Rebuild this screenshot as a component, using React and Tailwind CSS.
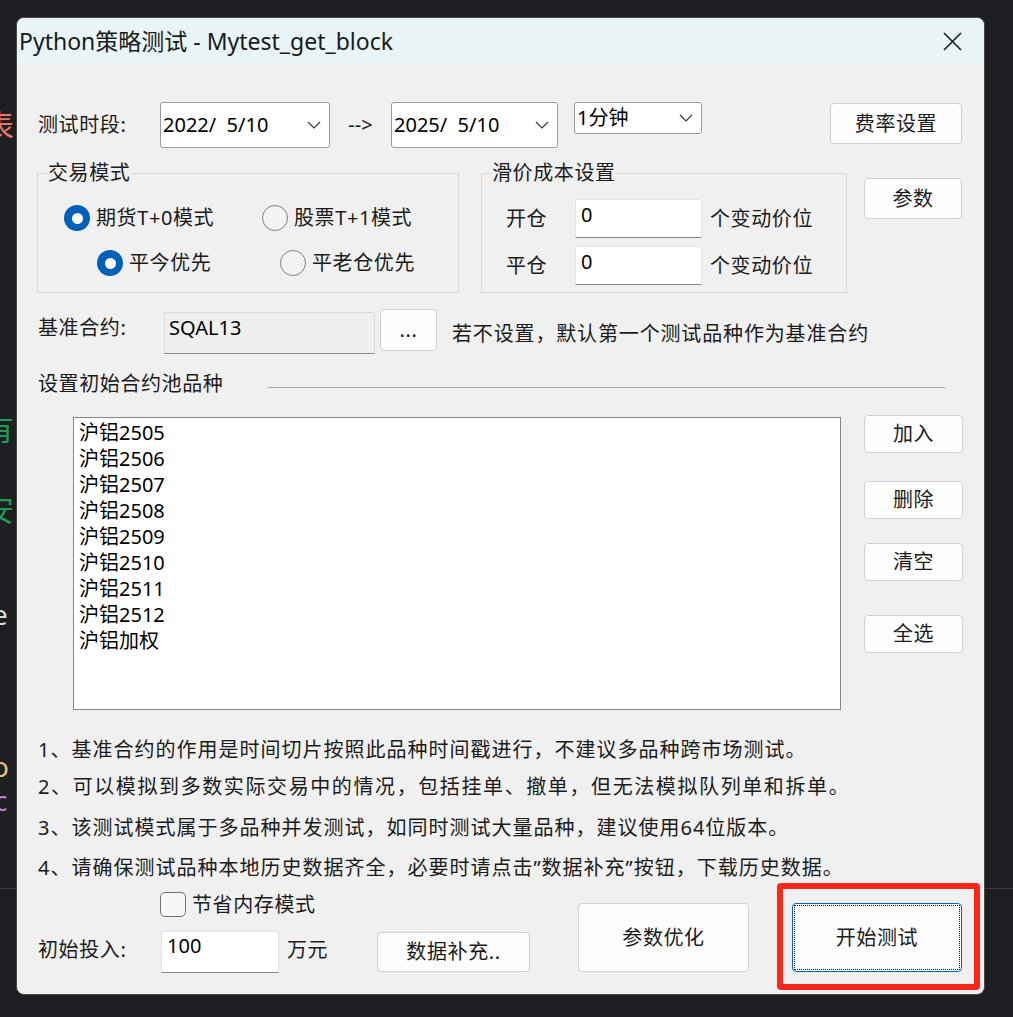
import React from "react";

function Chevron() {
  return (
    <svg width="14" height="8" viewBox="0 0 14 8">
      <polyline points="1,1 7,7 13,1" fill="none" stroke="#3a3a3a" strokeWidth="1.2" />
    </svg>
  );
}

function Btn({ children, className }) {
  return (
    <div
      className={
        "flex items-center justify-center rounded-[4px] border border-[#d0d0d0] bg-[#fdfdfd] text-[20px] leading-[28px] tracking-[0.6px] text-[#1b1b1b] " +
        className
      }
    >
      {children}
    </div>
  );
}

function Radio({ checked, label, className }) {
  return (
    <div className={"flex items-center " + className}>
      {checked ? (
        <div className="flex h-[26px] w-[26px] shrink-0 items-center justify-center rounded-full bg-[#005fb8]">
          <div className="h-[11px] w-[11px] rounded-full bg-white" />
        </div>
      ) : (
        <div className="h-[26px] w-[26px] shrink-0 rounded-full border-[1.5px] border-[#7f7f7f] bg-[#f3f3f3]" />
      )}
      <span className="ml-[6px] text-[20px] leading-[28px] tracking-[0.6px]">{label}</span>
    </div>
  );
}

function Combo({ text, className }) {
  return (
    <div
      className={
        "flex items-center justify-between rounded-[3px] border border-[#9a9a9a] bg-white pl-[2px] pr-[8px] " +
        className
      }
    >
      <span className="whitespace-pre text-[20px] leading-[28px] text-black">{text}</span>
      <Chevron />
    </div>
  );
}

function Edit({ value, className }) {
  return (
    <div
      className={
        "rounded-t-[3px] border border-[#e4e4e4] border-b-[1.5px] border-b-[#878787] bg-white pl-[5px] text-[20px] leading-[28px] text-black " +
        className
      }
    >
      {value}
    </div>
  );
}

const items = [
  "沪铝2505",
  "沪铝2506",
  "沪铝2507",
  "沪铝2508",
  "沪铝2509",
  "沪铝2510",
  "沪铝2511",
  "沪铝2512",
  "沪铝加权",
];

export default function App() {
  return (
    <div className="relative h-[1017px] w-[1013px] overflow-hidden bg-[#1e1f22] font-['Noto_Sans','Noto_Sans_CJK_SC',sans-serif] text-[#1b1b1b]">
      {/* desktop behind the window */}
      <div className="absolute left-0 top-[888px] h-px w-full bg-[#3a3b3f]" />
      <span className="absolute left-[-16px] top-[110px] text-[30px] leading-[30px] text-[#e8746a]">表</span>
      <span className="absolute left-[-16px] top-[414px] text-[30px] leading-[30px] text-[#1f9d55]">有</span>
      <span className="absolute left-[-16px] top-[495px] text-[30px] leading-[30px] text-[#1f9d55]">安</span>
      <span className="absolute left-[-8px] top-[602px] text-[28px] leading-[24px] text-[#d8d8d8]">e</span>
      <span className="absolute left-[-8px] top-[754px] text-[28px] leading-[24px] text-[#e5c07b]">o</span>
      <span className="absolute left-[-6px] top-[788px] text-[28px] leading-[24px] text-[#b57ee0]">c</span>

      <div className="relative pl-[16px] pt-[17px]">
        <div className="relative flex h-[978px] w-[969px] flex-col overflow-hidden rounded-[8px] border border-[#4a4a4a] bg-[#f0f0f0]">
          {/* title bar */}
          <div className="flex h-[46px] shrink-0 items-center justify-between bg-[#e9f4f7] pl-[2px] pr-[22px]">
            <span className="text-[23px] leading-[30px] text-[#1a1a1a]">Python策略测试 - Mytest_get_block</span>
            <svg width="19" height="19" viewBox="0 0 19 19">
              <path d="M1 1 L18 18 M18 1 L1 18" stroke="#1a1a1a" strokeWidth="1.6" fill="none" />
            </svg>
          </div>

          {/* row 1 */}
          <div className="mt-[38px] flex items-start">
            <div className="ml-[21px] flex h-[46px] w-[122px] items-center text-[20px] leading-[28px] tracking-[0.6px]">测试时段:</div>
            <Combo text="2022/  5/10" className="h-[46px] w-[170px]" />
            <div className="flex h-[46px] w-[61px] items-center justify-center text-[20px] leading-[28px]">--&gt;</div>
            <Combo text="2025/  5/10" className="h-[46px] w-[167px]" />
            <Combo text="1分钟" className="ml-[16px] h-[32px] w-[128px]" />
            <Btn className="ml-[128px] mt-[1px] h-[41px] w-[132px]">费率设置</Btn>
          </div>

          {/* row 2 : group boxes */}
          <div className="mt-[25px] flex items-start">
            <div className="relative ml-[20px] h-[120px] w-[422px] border border-[#d9d9d9]">
              <span className="absolute left-[9px] top-[-15px] bg-[#f0f0f0] px-[1px] text-[20px] leading-[28px] tracking-[0.6px]">交易模式</span>
              <div className="mt-[30px] flex pl-[26px]">
                <Radio checked label="期货T+0模式" className="w-[198px]" />
                <Radio label="股票T+1模式" />
              </div>
              <div className="mt-[17px] flex pl-[59px]">
                <Radio checked label="平今优先" className="w-[183px]" />
                <Radio label="平老仓优先" />
              </div>
            </div>

            <div className="relative ml-[22px] h-[120px] w-[366px] border border-[#d9d9d9]">
              <span className="absolute left-[9px] top-[-15px] bg-[#f0f0f0] px-[1px] text-[20px] leading-[28px] tracking-[0.6px]">滑价成本设置</span>
              <div className="mt-[25px] flex items-center pl-[24px]">
                <span className="w-[69px] text-[20px] leading-[28px] tracking-[0.6px]">开仓</span>
                <Edit value="0" className="h-[39px] w-[127px] pt-[1px]" />
                <span className="ml-[8px] text-[20px] leading-[28px] tracking-[0.6px]">个变动价位</span>
              </div>
              <div className="mt-[8px] flex items-center pl-[24px]">
                <span className="w-[69px] text-[20px] leading-[28px] tracking-[0.6px]">平仓</span>
                <Edit value="0" className="h-[39px] w-[127px] pt-[1px]" />
                <span className="ml-[8px] text-[20px] leading-[28px] tracking-[0.6px]">个变动价位</span>
              </div>
            </div>

            <Btn className="ml-[17px] mt-[5px] h-[41px] w-[98px]">参数</Btn>
          </div>

          {/* row 3 */}
          <div className="mt-[16px] flex items-start">
            <span className="ml-[21px] mt-[5px] w-[126px] text-[20px] leading-[28px] tracking-[0.6px]">基准合约:</span>
            <div className="mt-[3px] h-[42px] w-[211px] border border-[#dadada] border-b-[1.5px] border-b-[#8a8a8a] bg-[#efefef] pl-[4px] pt-[1px] text-[20px] leading-[28px] text-black">
              SQAL13
            </div>
            <Btn className="ml-[5px] h-[42px] w-[57px]">...</Btn>
            <span className="ml-[15px] mt-[11px] text-[20px] leading-[28px] tracking-[0.85px]">若不设置，默认第一个测试品种作为基准合约</span>
          </div>

          {/* row 4 */}
          <div className="mt-[16px] flex items-start">
            <span className="ml-[21px] w-[230px] text-[20px] leading-[28px] tracking-[0.6px]">设置初始合约池品种</span>
            <div className="mt-[17px] h-px w-[677px] bg-[#a6a6a6]" />
          </div>

          {/* row 5 : list */}
          <div className="mt-[19px] flex items-start">
            <div className="ml-[56px] h-[293px] w-[768px] border border-[#878787] bg-white pl-[5px] pt-[2px]">
              {items.map((t) => (
                <div key={t} className="text-[20px] leading-[26px] text-black">
                  {t}
                </div>
              ))}
            </div>
            <div className="ml-[23px] mt-[-2px] flex flex-col">
              <Btn className="h-[38px] w-[99px]">加入</Btn>
              <Btn className="mt-[28px] h-[38px] w-[99px]">删除</Btn>
              <Btn className="mt-[24px] h-[38px] w-[99px]">清空</Btn>
              <Btn className="mt-[34px] h-[38px] w-[99px]">全选</Btn>
            </div>
          </div>

          {/* notes */}
          <div className="ml-[21px] mt-[26px] text-[20px] leading-[28px] tracking-[1px]">
            1、基准合约的作用是时间切片按照此品种时间戳进行，不建议多品种跨市场测试。
          </div>
          <div className="ml-[21px] mt-[9px] text-[20px] leading-[28px] tracking-[1.6px]">
            2、可以模拟到多数实际交易中的情况，包括挂单、撤单，但无法模拟队列单和拆单。
          </div>
          <div className="ml-[21px] mt-[13px] text-[20px] leading-[28px] tracking-[1px]">
            3、该测试模式属于多品种并发测试，如同时测试大量品种，建议使用64位版本。
          </div>
          <div className="ml-[21px] mt-[12px] text-[20px] leading-[28px] tracking-[1px]">
            4、请确保测试品种本地历史数据齐全，必要时请点击”数据补充”按钮，下载历史数据。
          </div>

          {/* bottom row */}
          <div className="flex items-start">
            <div className="ml-[21px] mt-[10px] flex flex-col">
              <div className="flex h-[25px] items-center pl-[122px]">
                <div className="h-[25px] w-[26px] rounded-[5px] border-[1.5px] border-[#6f6f6f] bg-[#f6f6f6]" />
                <span className="ml-[6px] text-[20px] leading-[28px] tracking-[0.6px]">节省内存模式</span>
              </div>
              <div className="mt-[14px] flex items-start">
                <span className="mt-[5px] w-[123px] text-[20px] leading-[28px] tracking-[0.6px]">初始投入:</span>
                <Edit value="100" className="h-[42px] w-[118px]" />
                <span className="ml-[8px] mt-[5px] w-[90px] text-[20px] leading-[28px] tracking-[0.6px]">万元</span>
                <Btn className="mt-[1px] h-[40px] w-[153px]">数据补充..</Btn>
              </div>
            </div>
            <Btn className="ml-[48px] mt-[21px] h-[69px] w-[171px]">参数优化</Btn>
            <div className="relative ml-[43px] mt-[21px] h-[69px] w-[170px]">
              <div className="relative flex h-full w-full items-center justify-center rounded-[4px] border border-[#0067c0] bg-[#fdfdfd] text-[20px] leading-[28px] tracking-[0.6px] text-[#1b1b1b]">
                <div className="absolute inset-[1px] border border-dotted border-[#1a1a1a]" />
                开始测试
              </div>
              <div className="pointer-events-none absolute bottom-[-18px] left-[-15px] right-[-18px] top-[-20px] rounded-[4px] border-[6px] border-[#fe2519]" />
            </div>
          </div>
        </div>
      </div>
    </div>
  );
}
